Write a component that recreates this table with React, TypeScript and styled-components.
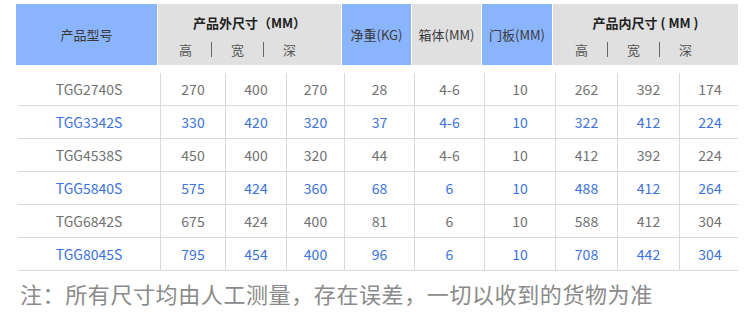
import styled, { createGlobalStyle } from "styled-components"

const GlobalStyle = createGlobalStyle`
   html, body {
      margin: 0;
      padding: 0;
      background: #ffffff;
   }
   body {
      font-family: "Noto Sans CJK SC", "Noto Sans", sans-serif;
   }
`

const COLUMNS = "142px 65px 61px 58px 70px 70px 71px 62px 62px 61px"

const StyledPage = styled.div`
   width: 750px;
   height: 316px;
   padding: 4px 12px 0 16px;
   box-sizing: border-box;
`

const StyledHead = styled.div`
   display: grid;
   grid-template-columns: ${COLUMNS};
   height: 61px;
   margin-bottom: 8px;
`

const StyledHeadCell = styled.div<{ $blue?: boolean; $span?: number }>`
   grid-column: span ${(p) => p.$span || 1};
   background: ${(p) => (p.$blue ? "#8ab4fb" : "#e0e0e0")};
   border-right: 1px solid #ffffff;
   display: flex;
   flex-direction: column;
   align-items: center;
   justify-content: center;
   color: #3a3a3a;
   font-size: 13px;
   &:last-child {
      border-right: none;
   }
`

const StyledGroupTitle = styled.div`
   font-weight: 700;
   font-size: 13px;
   color: #222222;
   line-height: 18px;
   margin-top: 3px;
`

const StyledSubRow = styled.div`
   display: flex;
   align-items: center;
   gap: 19px;
   margin-top: 9px;
   margin-right: 24px;
   font-size: 13px;
   color: #555555;
   line-height: 18px;
`

const StyledBar = styled.span`
   width: 1px;
   height: 15px;
   background: #666666;
`

const StyledRow = styled.div`
   display: grid;
   grid-template-columns: ${COLUMNS};
   height: 33px;
   margin-left: 2px;
   border-bottom: 1px solid #d9d9d9;
   box-sizing: border-box;
`

const StyledCell = styled.div<{ $blue?: boolean }>`
   display: flex;
   align-items: center;
   justify-content: center;
   font-size: 14px;
   color: ${(p) => (p.$blue ? "#3b72de" : "#717171")};
   & + & {
      border-left: 1px solid #d9d9d9;
   }
`

const StyledNote = styled.p`
   margin: 9px 0 0 4px;
   font-size: 22px;
   letter-spacing: 0.6px;
   color: #8a8a8a;
   line-height: 26px;
`

type TRow = string[]

const rows: TRow[] = [
   ["TGG2740S", "270", "400", "270", "28", "4-6", "10", "262", "392", "174"],
   ["TGG3342S", "330", "420", "320", "37", "4-6", "10", "322", "412", "224"],
   ["TGG4538S", "450", "400", "320", "44", "4-6", "10", "412", "392", "224"],
   ["TGG5840S", "575", "424", "360", "68", "6", "10", "488", "412", "264"],
   ["TGG6842S", "675", "424", "400", "81", "6", "10", "588", "412", "304"],
   ["TGG8045S", "795", "454", "400", "96", "6", "10", "708", "442", "304"],
]

const SubHeads = () => (
   <StyledSubRow>
      <span>高</span>
      <StyledBar />
      <span>宽</span>
      <StyledBar />
      <span>深</span>
   </StyledSubRow>
)

const App = () => {
   return (
      <StyledPage>
         <GlobalStyle />
         <StyledHead>
            <StyledHeadCell $blue>产品型号</StyledHeadCell>
            <StyledHeadCell $span={3}>
               <StyledGroupTitle>产品外尺寸（MM）</StyledGroupTitle>
               <SubHeads />
            </StyledHeadCell>
            <StyledHeadCell $blue>净重(KG)</StyledHeadCell>
            <StyledHeadCell>箱体(MM)</StyledHeadCell>
            <StyledHeadCell $blue>门板(MM)</StyledHeadCell>
            <StyledHeadCell $span={3}>
               <StyledGroupTitle>产品内尺寸 ( MM )</StyledGroupTitle>
               <SubHeads />
            </StyledHeadCell>
         </StyledHead>
         {rows.map((row, i) => (
            <StyledRow key={row[0]}>
               {row.map((value, j) => (
                  <StyledCell key={j} $blue={i % 2 === 1}>
                     {value}
                  </StyledCell>
               ))}
            </StyledRow>
         ))}
         <StyledNote>注：所有尺寸均由人工测量，存在误差，一切以收到的货物为准</StyledNote>
      </StyledPage>
   )
}

export default App
